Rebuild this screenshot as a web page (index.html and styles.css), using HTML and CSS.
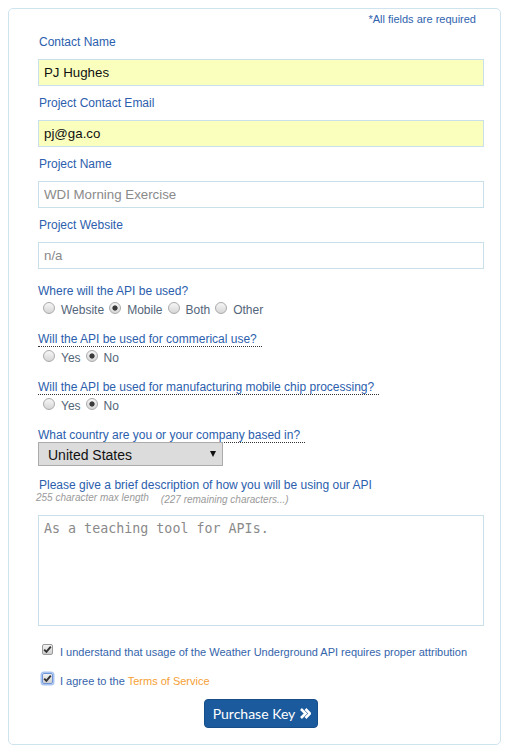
FILE: index.html
```html
<!DOCTYPE html>
<html>
<head>
<meta charset="utf-8">
<link rel="stylesheet" href="styles.css">
</head>
<body>
<form class="card">
  <p class="note">*All fields are required</p>

  <div class="field first">
    <label class="lbl">Contact Name</label>
    <input class="txt filled" type="text" value="PJ Hughes">
  </div>
  <div class="field">
    <label class="lbl">Project Contact Email</label>
    <input class="txt filled" type="text" value="pj@ga.co">
  </div>
  <div class="field">
    <label class="lbl">Project Name</label>
    <input class="txt" type="text" placeholder="WDI Morning Exercise">
  </div>
  <div class="field">
    <label class="lbl">Project Website</label>
    <input class="txt" type="text" placeholder="n/a">
  </div>

  <div class="group first">
    <div class="qrow"><span class="q plain">Where will the API be used?</span></div>
    <div class="opts"><label class="opt"><input type="radio" name="where"><span>Website</span></label><label class="opt"><input type="radio" name="where" checked><span>Mobile</span></label><label class="opt"><input type="radio" name="where"><span>Both</span></label><label class="opt"><input type="radio" name="where"><span>Other</span></label></div>
  </div>

  <div class="group">
    <div class="qrow"><span class="q">Will the API be used for commerical use?</span></div>
    <div class="opts"><label class="opt"><input type="radio" name="comm"><span>Yes</span></label><label class="opt"><input type="radio" name="comm" checked><span>No</span></label></div>
  </div>

  <div class="group">
    <div class="qrow"><span class="q">Will the API be used for manufacturing mobile chip processing?</span></div>
    <div class="opts"><label class="opt"><input type="radio" name="chip"><span>Yes</span></label><label class="opt"><input type="radio" name="chip" checked><span>No</span></label></div>
  </div>

  <div class="group">
    <div class="qrow"><span class="q">What country are you or your company based in?</span></div>
  </div>
  <div class="selrow">
    <span class="selwrap"><select class="sel"><option>United States</option></select></span>
  </div>

  <label class="lbl desc">Please give a brief description of how you will be using our API</label>
  <div class="hints"><span class="hint">255 character max length</span><span class="hint remain">(227 remaining characters...)</span></div>
  <textarea class="area" placeholder="As a teaching tool for APIs."></textarea>

  <div class="chk first"><span class="box"><svg viewBox="0 0 11 11" width="11" height="11"><path d="M2.2 5.6 L4.4 7.9 L8.8 2.6" fill="none" stroke="#333" stroke-width="1.9"/></svg></span>I understand that usage of the Weather Underground API requires proper attribution</div>
  <div class="chk"><span class="box focus"><svg viewBox="0 0 11 11" width="11" height="11"><path d="M2.2 5.6 L4.4 7.9 L8.8 2.6" fill="none" stroke="#333" stroke-width="1.9"/></svg></span>I agree to the <a class="tos" href="#">Terms of Service</a></div>

  <div class="actions">
    <button class="buy" type="button"><span>Purchase Key</span><svg class="chev" viewBox="0 0 11 11" width="11" height="11"><path d="M1 1 L5.5 5.5 L1 10" fill="none" stroke="#fff" stroke-width="2.6"/><path d="M5.5 1 L10 5.5 L5.5 10" fill="none" stroke="#fff" stroke-width="2.6"/></svg></button>
  </div>
</form>
</body>
</html>
```

FILE: styles.css
```css
html, body {
  background: #fff;
}
body {
  margin: 8px;
  font-family: "Liberation Sans", Arial, sans-serif;
  color: #2b5ead;
}
.card {
  margin: 0;
  border: 1px solid #cfe3ee;
  border-radius: 5px;
  padding: 4px 16px 16px 29px;
}
.note {
  margin: 0 8px 0 0;
  font-size: 11px;
  line-height: 13px;
  text-align: right;
  color: #2f63ae;
}
.lbl {
  display: block;
  font-size: 12px;
  line-height: 14px;
  padding-left: 1px;
  color: #2b5ead;
}
.field .lbl {
  margin: 10px 0 10px;
}
.field.first .lbl {
  margin-top: 9px;
}
.txt {
  display: block;
  box-sizing: border-box;
  width: 100%;
  height: 27px;
  margin: 0;
  padding: 0 5px;
  border: 1px solid #c8e0ea;
  border-radius: 0;
  font-family: "Liberation Sans", Arial, sans-serif;
  font-size: 13.3px;
  color: #111;
  background: #fff;
  outline: none;
}
.txt.filled {
  background: #faffbd;
}
.txt::placeholder {
  color: #8a8a8a;
}
.group {
  margin-top: 14px;
  font-size: 12px;
  line-height: 14px;
}
.group.first {
  margin-top: 15px;
}
.qrow {
  display: flex;
}
.q {
  display: block;
  font-size: 12px;
  line-height: 14px;
  border-bottom: 1px dotted #333;
  padding-right: 5px;
  color: #2b5ead;
}
.q.plain {
  border-bottom-color: transparent;
}
.opts {
  margin-top: 3px;
  padding-left: 5px;
  font-size: 12px;
  line-height: 16px;
  color: #536579;
}
.opt {
  margin-right: 5px;
}
.opt input {
  -webkit-appearance: none;
  appearance: none;
  box-sizing: border-box;
  display: inline-block;
  width: 12px;
  height: 12px;
  margin: 0 6px 0 0;
  vertical-align: baseline;
  border: 1px solid #aaa;
  border-radius: 50%;
  background: linear-gradient(#f6f6f6, #d6d6d6);
  outline: none;
}
.opt input:checked {
  background: radial-gradient(circle at 50% 50%, #3a3a3a 0, #3a3a3a 2.2px, rgba(0,0,0,0) 3px), linear-gradient(#f6f6f6, #d6d6d6);
}
.selrow {
  display: flex;
  margin-top: -1px;
}
.selwrap {
  position: relative;
  display: block;
}
.selwrap::after {
  content: "";
  position: absolute;
  right: 7px;
  top: 9px;
  width: 0;
  height: 0;
  border-left: 3.5px solid transparent;
  border-right: 3.5px solid transparent;
  border-top: 6px solid #111;
}
.sel {
  -webkit-appearance: none;
  appearance: none;
  display: block;
  box-sizing: border-box;
  width: 185px;
  height: 24px;
  margin: 0;
  padding: 1px 0 0 9px;
  border: 1px solid #ababab;
  border-radius: 0;
  background: #dcdcdc;
  font-family: "Liberation Sans", Arial, sans-serif;
  font-size: 14px;
  color: #111;
  outline: none;
}
.desc {
  margin-top: 12px;
}
.hints {
  font-size: 10px;
  line-height: 12px;
  font-style: italic;
  color: #9a9a9a;
}
.hint {
  margin-left: -2px;
}
.hint.remain {
  margin-left: 12px;
  vertical-align: -2px;
}
.area {
  display: block;
  box-sizing: border-box;
  width: 100%;
  height: 111px;
  margin: 9px 0 0;
  padding: 5px 5px;
  border: 1px solid #c8e0ea;
  border-radius: 0;
  resize: none;
  font-family: "DejaVu Sans Mono", monospace;
  font-size: 13.33px;
  color: #333;
  outline: none;
}
.area::placeholder {
  color: #8a8a8a;
}
.chk {
  margin-top: 13px;
  padding-left: 4px;
  font-size: 11px;
  line-height: 16px;
  color: #3464ab;
}
.chk.first {
  margin-top: 18px;
}
.box {
  display: inline-block;
  box-sizing: border-box;
  width: 11px;
  height: 11px;
  margin: 0 7px 1px 0;
  vertical-align: baseline;
  overflow: hidden;
  border: 1px solid #9a9a9a;
  border-radius: 2px;
  background: linear-gradient(#f2f2f2, #cfcfcf);
}
.box svg {
  display: block;
  margin: -1px 0 0 -1px;
}
.box.focus {
  border-color: #6f95d6;
  box-shadow: 0 0 0 1.5px #a9c3f0;
}
.tos {
  color: #f5a033;
  text-decoration: none;
}
.actions {
  display: flex;
  justify-content: center;
  margin-top: 10px;
}
.buy {
  display: inline-flex;
  align-items: center;
  gap: 5px;
  box-sizing: border-box;
  height: 29px;
  margin: 0;
  padding: 0 6px 0 8px;
  border: 1px solid #164e8a;
  border-radius: 4px;
  background: #1b5a9c;
  color: #fff;
  font-family: Lato, "Open Sans", sans-serif;
  font-size: 14px;
  cursor: pointer;
}
.chev {
  display: block;
}
```
